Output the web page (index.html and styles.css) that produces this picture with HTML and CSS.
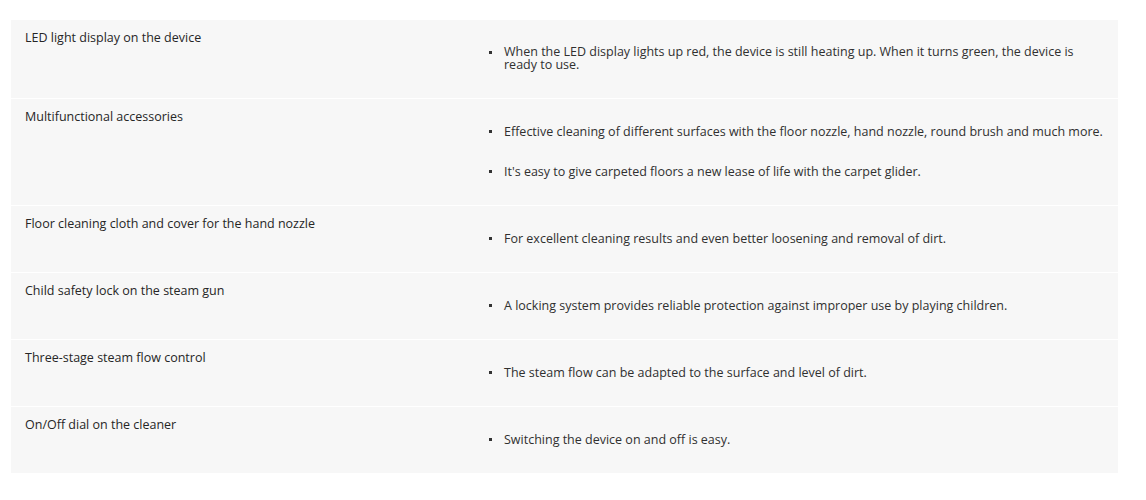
FILE: index.html
```html
<!DOCTYPE html>
<html lang="en">
<head>
<meta charset="utf-8">
<title>Features</title>
<link rel="stylesheet" href="styles.css">
</head>
<body>
<div class="features">
  <div class="row">
    <div class="label">LED light display on the device</div>
    <ul class="values">
      <li class="wrap">When the LED display lights up red, the device is still heating up. When it turns green, the device is ready to use.</li>
    </ul>
  </div>
  <div class="row">
    <div class="label">Multifunctional accessories</div>
    <ul class="values">
      <li>Effective cleaning of different surfaces with the floor nozzle, hand nozzle, round brush and much more.</li>
      <li>It's easy to give carpeted floors a new lease of life with the carpet glider.</li>
    </ul>
  </div>
  <div class="row">
    <div class="label">Floor cleaning cloth and cover for the hand nozzle</div>
    <ul class="values">
      <li>For excellent cleaning results and even better loosening and removal of dirt.</li>
    </ul>
  </div>
  <div class="row">
    <div class="label">Child safety lock on the steam gun</div>
    <ul class="values">
      <li>A locking system provides reliable protection against improper use by playing children.</li>
    </ul>
  </div>
  <div class="row">
    <div class="label">Three-stage steam flow control</div>
    <ul class="values">
      <li>The steam flow can be adapted to the surface and level of dirt.</li>
    </ul>
  </div>
  <div class="row">
    <div class="label">On/Off dial on the cleaner</div>
    <ul class="values">
      <li>Switching the device on and off is easy.</li>
    </ul>
  </div>
</div>
</body>
</html>
```
FILE: styles.css
```css
html, body {
  background: #ffffff;
}
body {
  margin: 20px 28px 0 11px;
  font-family: "Open Sans", "Noto Sans", sans-serif;
  font-size: 12.5px;
  color: #303030;
}
.features {
  display: flex;
  flex-direction: column;
  gap: 1px;
}
.row {
  display: grid;
  grid-template-columns: 464px 1fr;
  background: #f7f7f7;
}
.label {
  padding: 10px 14px 0 14px;
  line-height: 16px;
  color: #262626;
}
.values {
  list-style: none;
  margin: 0;
  padding: 26px 14px 27px 14px;
}
.values li {
  display: flex;
  align-items: flex-start;
  line-height: 13px;
}
.values li::before {
  content: "";
  flex: none;
  width: 3px;
  height: 3px;
  margin: 5px 12px 0 0;
  background: #333333;
}
.values li + li {
  margin-top: 27px;
}
.values li.wrap {
  line-height: 12.5px;
}
```
